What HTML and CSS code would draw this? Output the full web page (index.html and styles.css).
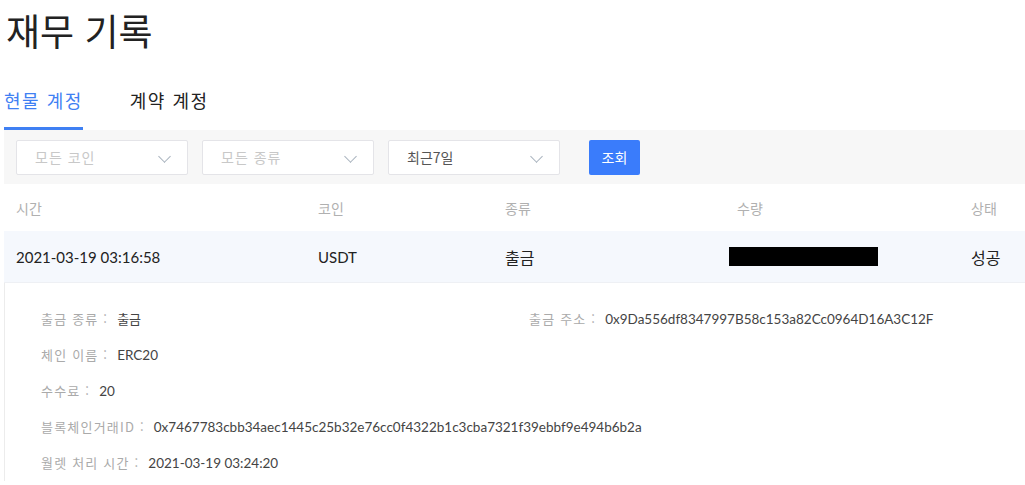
FILE: index.html
```html
<!DOCTYPE html>
<html lang="ko">
<head>
  <meta charset="UTF-8">
  <title>재무 기록</title>
  <link rel="stylesheet" href="styles.css">
</head>
<body>
  <div class="page">
    <h1 class="title">재무 기록</h1>

    <div class="tabs">
      <div class="tab active">현물 계정</div>
      <div class="tab">계약 계정</div>
    </div>

    <div class="filters">
      <div class="select placeholder">모든 코인<span class="chevron"></span></div>
      <div class="select placeholder">모든 종류<span class="chevron"></span></div>
      <div class="select">최근7일<span class="chevron"></span></div>
      <button class="search-btn">조회</button>
    </div>

    <div class="table">
      <div class="row head">
        <div>시간</div>
        <div>코인</div>
        <div>종류</div>
        <div>수량</div>
        <div>상태</div>
      </div>
      <div class="row item">
        <div>2021-03-19 03:16:58</div>
        <div>USDT</div>
        <div class="kr">출금</div>
        <div><span class="masked"></span></div>
        <div class="kr">성공</div>
      </div>
    </div>

    <div class="detail">
      <div class="line"><span class="label">출금 종류 :</span><span class="value kr">출금</span></div>
      <div class="line"><span class="label">출금 주소 :</span><span class="value">0x9Da556df8347997B58c153a82Cc0964D16A3C12F</span></div>
      <div class="line"><span class="label">체인 이름 :</span><span class="value">ERC20</span></div>
      <div class="line"></div>
      <div class="line"><span class="label">수수료 :</span><span class="value">20</span></div>
      <div class="line"></div>
      <div class="line"><span class="label">블록체인거래ID :</span><span class="value">0x7467783cbb34aec1445c25b32e76cc0f4322b1c3cba7321f39ebbf9e494b6b2a</span></div>
      <div class="line"></div>
      <div class="line"><span class="label">월렛 처리 시간 :</span><span class="value">2021-03-19 03:24:20</span></div>
    </div>
  </div>
</body>
</html>
```

FILE: styles.css
```css
body {
  margin: 0;
  font-family: Lato, "Noto Sans CJK KR", sans-serif;
  color: #333;
  background: #fff;
  overflow: hidden;
}
.page {
  padding-left: 4px;
}
.title {
  margin: 0;
  padding: 7px 0 0 2px;
  height: 52px;
  font-family: "Noto Sans CJK KR", sans-serif;
  font-size: 37px;
  font-weight: 400;
  line-height: 46px;
  color: #222;
}
.tabs {
  display: flex;
  gap: 47px;
  margin-top: 28px;
}
.tab {
  font-family: "Noto Sans CJK KR", sans-serif;
  font-size: 18px;
  letter-spacing: 1.5px;
  line-height: 26px;
  color: #222;
  padding-bottom: 14px;
  border-bottom: 3px solid transparent;
}
.tab.active {
  color: #3f80f3;
  border-bottom-color: #3f80f3;
}
.filters {
  display: flex;
  align-items: center;
  background: #f7f7f7;
  height: 54px;
  padding-left: 12px;
}
.select {
  position: relative;
  box-sizing: border-box;
  width: 172px;
  height: 35px;
  margin-right: 14px;
  padding-left: 18px;
  background: #fff;
  border: 1px solid #e4e4e8;
  border-radius: 2px;
  font-family: "Noto Sans CJK KR", sans-serif;
  font-size: 14px;
  line-height: 33px;
  color: #555;
}
.select.placeholder {
  color: #c8c8c8;
  letter-spacing: 1px;
}
.chevron {
  position: absolute;
  right: 18px;
  top: 11px;
  width: 8px;
  height: 8px;
  border-right: 1px solid #a8b2bd;
  border-bottom: 1px solid #a8b2bd;
  transform: rotate(45deg);
}
.search-btn {
  margin-left: 15px;
  width: 51px;
  height: 35px;
  border: none;
  border-radius: 2px;
  background: #3a7cfb;
  color: #fff;
  font-family: "Noto Sans CJK KR", sans-serif;
  font-size: 14px;
  padding: 0;
}
.row {
  display: grid;
  grid-template-columns: 302px 187px 232px 234px 1fr;
  align-items: center;
  padding-left: 12px;
}
.row.head {
  height: 47px;
  font-family: "Noto Sans CJK KR", sans-serif;
  font-size: 14px;
  color: #b0b0b0;
}
.row.item {
  height: 51px;
  background: #f5f8fd;
  border-bottom: 1px solid #eef0f4;
  font-size: 15px;
  color: #222;
}
.row.item .kr {
  font-family: "Noto Sans CJK KR", sans-serif;
  font-size: 16px;
}
.masked {
  display: block;
  width: 149px;
  height: 19px;
  margin-left: -8px;
  background: #000;
}
.detail {
  display: grid;
  grid-template-columns: 488px 1fr;
  padding: 18px 0 0 36px;
  border-left: 1px solid #ececec;
  font-size: 13.5px;
}
.line {
  height: 36px;
  line-height: 36px;
  white-space: nowrap;
}
.label {
  font-family: "Noto Sans CJK KR", sans-serif;
  font-size: 13px;
  letter-spacing: 1.2px;
  color: #aaa;
  margin-right: 9px;
}
.value {
  color: #444;
}
.value.kr {
  font-family: "Noto Sans CJK KR", sans-serif;
  font-size: 13px;
}
```
